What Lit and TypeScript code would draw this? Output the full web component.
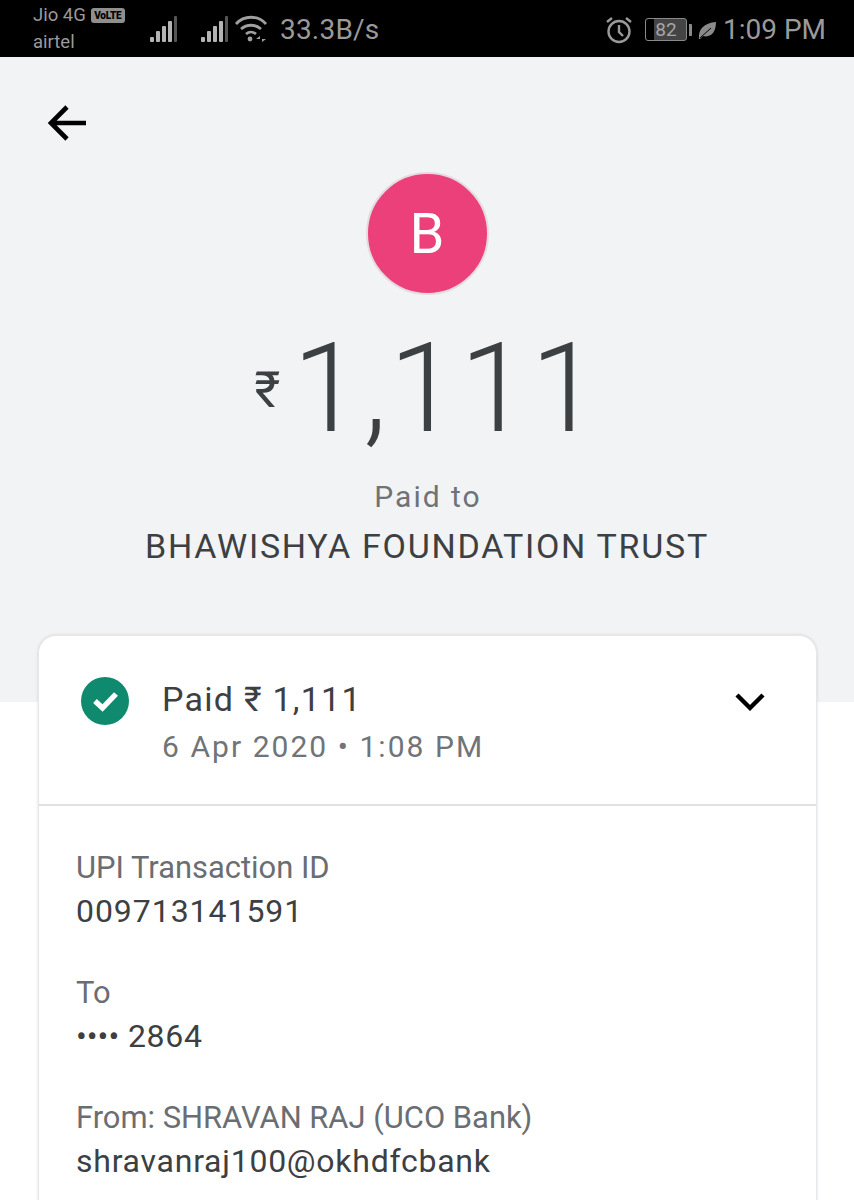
import { LitElement, html, css, svg } from "lit";
import { customElement } from "lit/decorators.js";

@customElement("app-root")
export class AppRoot extends LitElement {
  static styles = css`
    :host { display: block; width: 854px; height: 1200px; overflow: hidden; background: #fff; font-family: Roboto, "Noto Sans", sans-serif; color: #3c4043; }
    .status { height: 57px; background: #000; color: #9a9a9a; display: flex; align-items: center; padding: 2px 28px 0 33px; box-sizing: border-box; }
    .carrier { display: flex; flex-direction: column; font-size: 18.5px; line-height: 27px; width: 116px; margin-top: -1px; flex: none; }
    .carrier-top { display: flex; align-items: center; gap: 5px; }
    .volte { font-size: 10px; font-weight: 900; background: #8f8f8f; color: #000; border-radius: 3px; width: 34px; text-align: center; line-height: 15px; letter-spacing: -.2px; }
    .sig { display: block; margin-top: -2px; }
    .sig2 { margin-left: 23px; }
    .wifi { margin-left: 6px; margin-top: -3px; }
    .speed { font-size: 28px; margin-left: 12px; letter-spacing: .2px; }
    .spacer { flex: 1; }
    .batt { width: 42px; height: 23px; border: 1px solid #8a8a8a; border-radius: 3px; box-sizing: border-box; display: flex; align-items: center; justify-content: center; font-size: 19px; background: linear-gradient(90deg, #000 20%, #444 20%); color: #a6a6a6; margin-left: 12px; }
    .nub { width: 3px; height: 12px; background: #8a8a8a; margin-left: 2px; border-radius: 0 1px 1px 0; }
    .leaf { margin-left: 5px; }
    .time { font-size: 28px; margin-left: 6px; }

    .hero { height: 645px; background: #f1f3f4; display: flex; flex-direction: column; align-items: center; box-sizing: border-box; padding-top: 48px; }
    .back { align-self: flex-start; margin-left: 47px; display: block; }
    .avatar { width: 119px; height: 119px; margin-top: 31px; border-radius: 50%; background: #ec407a; border: 2px solid #e4dbe0; display: flex; align-items: center; justify-content: center; color: #fff; font-size: 56px; flex: none; }
    .amount { display: flex; align-items: center; margin-top: 19px; height: 150px; color: #3c4043; margin-left: 2px; }
    .rupee { font-size: 50px; margin-top: 1px; margin-right: 12px; }
    .value { font-size: 124px; font-weight: 300; line-height: 150px; letter-spacing: 2px; }
    .paid-to { font-size: 30px; color: #6f7378; margin-top: 13px; margin-left: 2px; line-height: 40px; letter-spacing: 2px; }
    .name { font-size: 34px; line-height: 44px; margin-top: 7px; letter-spacing: 1.73px; color: #3c4043; white-space: nowrap; }

    .card { margin: -67px 37px 0 38px; background: #fff; border-radius: 18px 18px 0 0; border: 1px solid #e6e7e8; border-bottom: 0; box-shadow: 0 0 3px rgba(0,0,0,.14); position: relative; }
    .head { display: flex; height: 170px; box-sizing: border-box; border-bottom: 2px solid #dfe1e3; padding: 41px 51px 0 42px; }
    .check { display: block; flex: none; }
    .head-text { flex: 1; margin-left: 33px; margin-top: 1px; }
    .head-title { font-size: 34px; line-height: 42px; letter-spacing: 1.25px; color: #3c4043; }
    .head-date { font-size: 30px; line-height: 42px; letter-spacing: 2.05px; color: #707478; margin-top: 6px; }
    .chev { display: block; margin-top: 15px; }
    .body { padding: 40px 37px; }
    .row { margin-bottom: 38px; }
    .label { font-size: 30.9px; line-height: 44px; color: #6a6e73; white-space: nowrap; }
    .val { font-size: 32px; line-height: 44px; margin-top: -1px; letter-spacing: .75px; color: #3c4043; white-space: nowrap; }
    .id { letter-spacing: .95px; }
    .dots { letter-spacing: 0; }
  `;

  render() {
    return html`
      <div class="status">
        <div class="carrier">
          <div class="carrier-top"><span>Jio 4G</span><span class="volte">VoLTE</span></div>
          <div>airtel</div>
        </div>
        ${this.signal("sig")}
        ${this.signal("sig sig2")}
        <svg class="wifi" width="34" height="28" viewBox="0 0 34 28" fill="none" stroke="#a0a0a0" stroke-width="2.8">
          <path d="M2 10C10 1 24 1 32 10M7 15c6-5 14-5 20 0M12 20c3-2.5 7-2.5 10 0" />
          <circle cx="16" cy="25" r="2.4" fill="#a0a0a0" stroke="none" />
          <path d="M26 28v-6l-4 3h4zM28 22v6l4-3h-4z" fill="#a0a0a0" stroke="none" />
        </svg>
        <span class="speed">33.3B/s</span>
        <span class="spacer"></span>
        <svg width="28" height="28" viewBox="0 0 28 28" fill="none" stroke="#9a9a9a" stroke-width="2.4">
          <circle cx="14" cy="15.5" r="10.5" />
          <path d="M14 9v7l4 4M2 6l5-4M26 6l-5-4" />
        </svg>
        <div class="batt">82</div>
        <div class="nub"></div>
        <svg class="leaf" width="20" height="20" viewBox="0 0 20 20">
          <path d="M2 19C1 9 7 3 19 2c0 10-5 16-13 14l-3 3z" fill="#8a8a8a" />
          <path d="M3 18L14 8" stroke="#000" stroke-width="1" fill="none" />
        </svg>
        <span class="time">1:09 PM</span>
      </div>
      <div class="hero">
        <svg class="back" width="40" height="36" viewBox="0 0 40 36" fill="none" stroke="#000" stroke-width="4.6">
          <path d="M39 18H4M20 2L4 18l16 16" />
        </svg>
        <div class="avatar">B</div>
        <div class="amount"><span class="rupee">₹</span><span class="value">1,111</span></div>
        <div class="paid-to">Paid to</div>
        <div class="name">BHAWISHYA FOUNDATION TRUST</div>
      </div>
      <div class="card">
        <div class="head">
          <svg class="check" width="48" height="48" viewBox="0 0 48 48">
            <circle cx="24" cy="24" r="24" fill="#0f8a6f" />
            <path d="M14 24l7.5 7L35 17" fill="none" stroke="#fff" stroke-width="5.4" />
          </svg>
          <div class="head-text">
            <div class="head-title">Paid ₹ 1,111</div>
            <div class="head-date">6 Apr 2020 • 1:08 PM</div>
          </div>
          <svg class="chev" width="30" height="20" viewBox="0 0 30 20" fill="none" stroke="#000" stroke-width="4.4">
            <path d="M2 3l13 13L28 3" />
          </svg>
        </div>
        <div class="body">
          <div class="row"><div class="label">UPI Transaction ID</div><div class="val id">009713141591</div></div>
          <div class="row"><div class="label">To</div><div class="val"><span class="dots">••••</span> 2864</div></div>
          <div class="row"><div class="label">From: SHRAVAN RAJ (UCO Bank)</div><div class="val">shravanraj100@okhdfcbank</div></div>
        </div>
      </div>
    `;
  }

  signal(cls: string) {
    const bars: [number, number, number, string][] = [
      [1, 21, 4, "#b4b4b4"],
      [7, 15, 4, "#b4b4b4"],
      [13, 10, 4, "#b4b4b4"],
      [19, 5, 4, "#b4b4b4"],
      [25, 0, 3, "#555"],
    ];
    return html`<svg class=${cls} width="28" height="26" viewBox="0 0 28 26">
      ${bars.map(([x, y, w, c]) => svg`<rect x=${x} y=${y} width=${w} height=${26 - y} rx="1" fill=${c}></rect>`)}
    </svg>`;
  }
}
